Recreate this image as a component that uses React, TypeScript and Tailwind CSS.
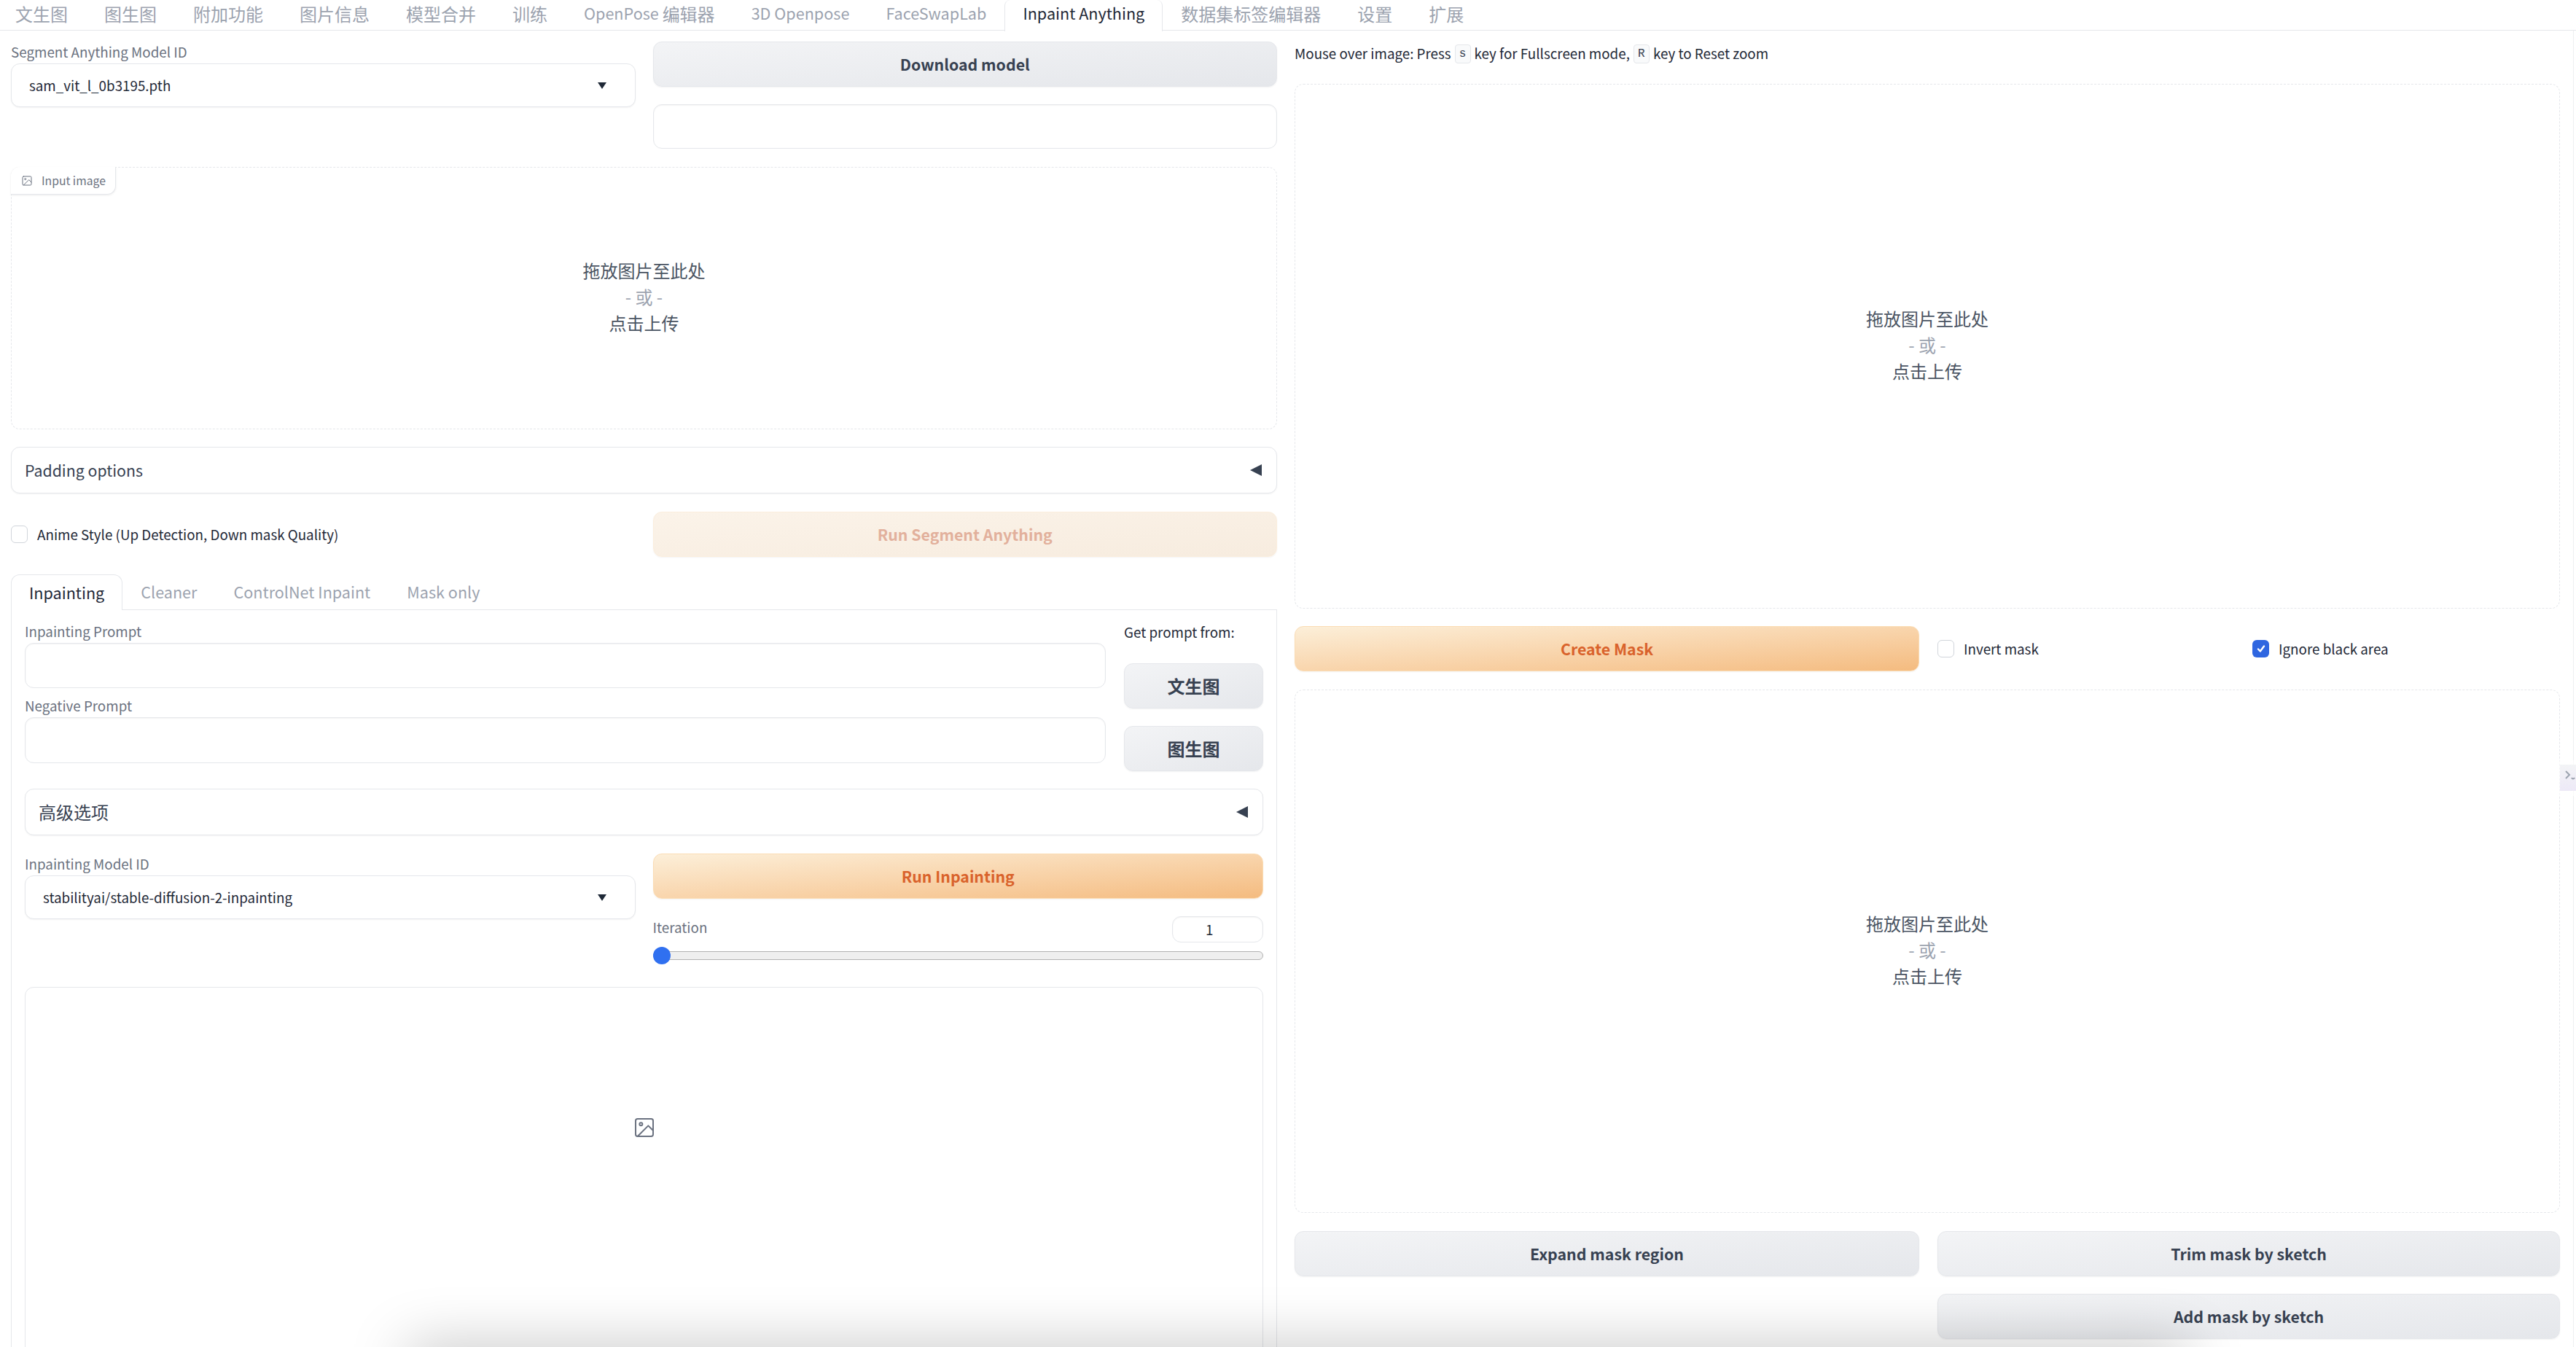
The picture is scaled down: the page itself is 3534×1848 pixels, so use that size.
const FONT = "font-['Noto_Sans_CJK_SC','Noto_Sans',sans-serif]";

function ImageIcon({ className }: { className: string }) {
  return (
    <svg className={className} viewBox="0 0 24 24" fill="none" stroke="currentColor" strokeWidth="1.5" strokeLinecap="round" strokeLinejoin="round">
      <rect x="3" y="3" width="18" height="18" rx="2" />
      <circle cx="8.5" cy="8.5" r="1.5" />
      <path d="M21 15l-5-5L5 21" />
    </svg>
  );
}

function Label({ children }: { children: React.ReactNode }) {
  return <div className="text-[18.8px] leading-[28px] h-[30px] text-[#6b7280] whitespace-nowrap">{children}</div>;
}

function Select({ value }: { value: string }) {
  return (
    <div className="h-[60px] flex items-center justify-between rounded-xl border border-[#e5e7eb] bg-white pl-6 pr-[39px] shadow-[0_1px_2px_rgba(0,0,0,0.05)] text-[18.8px] text-[#1f2937]">
      <span>{value}</span>
      <span className="w-0 h-0 border-l-[6px] border-r-[6px] border-t-[9px] border-l-transparent border-r-transparent border-t-[#1f2937]" />
    </div>
  );
}

function GrayButton({ children, className = "" }: { children: React.ReactNode; className?: string }) {
  return (
    <div className={`h-[62px] flex items-center justify-center rounded-xl border border-[#e5e7eb] bg-gradient-to-br from-[#f3f4f6] to-[#e5e7eb] shadow-[0_1px_2px_rgba(0,0,0,0.05)] text-[#374151] font-semibold text-[21.3px] ${className}`}>
      {children}
    </div>
  );
}

function PrimaryButton({ children }: { children: React.ReactNode }) {
  return (
    <div className="h-[62px] flex items-center justify-center rounded-xl border border-[#fbdcb4] bg-gradient-to-br from-[#fcefd9] to-[#f4bb7f] shadow-[0_1px_2px_rgba(0,0,0,0.05)] text-[#d9622b] font-semibold text-[21.3px]">
      {children}
    </div>
  );
}

function Upload() {
  return (
    <div className="text-center text-[24px] leading-[36px] text-[#4b5563] mb-[4px]">
      <div>拖放图片至此处</div>
      <div className="text-[#9ca3af]">- 或 -</div>
      <div>点击上传</div>
    </div>
  );
}

function DropZone({ className, tag = false }: { className: string; tag?: boolean }) {
  return (
    <div className={`relative flex items-center justify-center rounded-xl border border-dashed border-[#e5e7eb] bg-white ${className}`}>
      {tag && (
        <div className="absolute left-[-1px] top-[-1px] w-[144px] h-[38px] flex items-center gap-[12px] pl-[14px] bg-white rounded-tl-xl rounded-br-xl border-r border-b border-[#e5e7eb] shadow-[0_1px_3px_rgba(0,0,0,0.08)] text-[#6b7280] text-[15.7px]">
          <ImageIcon className="w-[16px] h-[16px] text-[#6b7280]" />
          <span>Input image</span>
        </div>
      )}
      <Upload />
    </div>
  );
}

function Accordion({ title, size }: { title: string; size: string }) {
  return (
    <div className={`h-[64px] flex items-center justify-between rounded-xl border border-[#e5e7eb] bg-white pl-[18px] pr-[20px] shadow-[0_1px_2px_rgba(0,0,0,0.05)] text-[#374151] ${size}`}>
      <span>{title}</span>
      <span className="w-0 h-0 border-t-[8px] border-b-[8px] border-r-[16px] border-t-transparent border-b-transparent border-r-[#374151]" />
    </div>
  );
}

function Check({ label, checked = false }: { label: string; checked?: boolean }) {
  return (
    <div className="flex items-center gap-[13px] text-[18.8px] text-[#1f2937] whitespace-nowrap">
      {checked ? (
        <span className="w-[23px] h-[24px] rounded-md bg-[#2f66e0] flex items-center justify-center">
          <svg viewBox="0 0 16 16" className="w-[16px] h-[16px]" fill="none" stroke="white" strokeWidth="2.4" strokeLinecap="round" strokeLinejoin="round">
            <path d="M4 8.5l2.8 3L12 4.5" />
          </svg>
        </span>
      ) : (
        <span className="w-[23px] h-[24px] rounded-md border border-[#d1d5db] bg-white" />
      )}
      <span>{label}</span>
    </div>
  );
}

function Textbox({ className }: { className: string }) {
  return <div className={`rounded-xl border border-[#e5e7eb] bg-white shadow-[inset_0_1px_2px_rgba(0,0,0,0.05)] ${className}`} />;
}

function Kbd({ children }: { children: React.ReactNode }) {
  return (
    <kbd className="mx-[5px] w-[22px] h-[26px] rounded border border-[#e5e7eb] bg-[#f9fafb] flex items-center justify-center text-[16px] text-[#374151]">
      {children}
    </kbd>
  );
}

const TOP_TABS: { latin?: string; cjk?: string }[] = [
  { cjk: "文生图" },
  { cjk: "图生图" },
  { cjk: "附加功能" },
  { cjk: "图片信息" },
  { cjk: "模型合并" },
  { cjk: "训练" },
  { latin: "OpenPose ", cjk: "编辑器" },
  { latin: "3D Openpose" },
  { latin: "FaceSwapLab" },
  { latin: "Inpaint Anything" },
  { cjk: "数据集标签编辑器" },
  { cjk: "设置" },
  { cjk: "扩展" },
];
const SUB_TABS = ["Inpainting", "Cleaner", "ControlNet Inpaint", "Mask only"];

export default function App() {
  return (
    <div className={`relative h-[1848px] overflow-hidden bg-white ${FONT}`}>
      {/* top tabs */}
      <div className="h-[42px] flex border-b border-[#e5e7eb] text-[24px] text-[#9ca3af]">
        {TOP_TABS.map((t, i) => (
          <div
            key={i}
            className={
              t.latin === "Inpaint Anything"
                ? "h-[43px] px-[24px] pb-[6px] flex items-center whitespace-pre bg-white border-x border-[#e5e7eb] rounded-t-lg text-[#1f2937]"
                : `h-[41px] px-[25px] pb-[4px] flex items-center whitespace-pre ${i === 0 ? "pl-[21px]" : ""}`
            }
          >
            {t.latin && <span className="text-[21.6px]">{t.latin}</span>}
            {t.cjk && <span>{t.cjk}</span>}
          </div>
        ))}
      </div>

      <div className="grid grid-cols-[1737px_1736px] gap-x-[24px] pl-[15px] pt-[15px]">
        {/* LEFT */}
        <div className="flex flex-col">
          <div className="grid grid-cols-2 gap-x-[24px]">
            <div>
              <Label>Segment Anything Model ID</Label>
              <Select value="sam_vit_l_0b3195.pth" />
            </div>
            <div className="flex flex-col gap-[24px]">
              <GrayButton>Download model</GrayButton>
              <Textbox className="h-[61px]" />
            </div>
          </div>

          <DropZone tag className="mt-[25px] h-[360px]" />

          <div className="mt-[24px]">
            <Accordion title="Padding options" size="text-[21.3px]" />
          </div>

          <div className="mt-[25px] grid grid-cols-2 gap-x-[24px] items-center">
            <Check label="Anime Style (Up Detection, Down mask Quality)" />
            <div className="h-[62px] flex items-center justify-center rounded-xl border border-[#fbeedd] bg-gradient-to-br from-[#fbf3e9] to-[#f7ecdf] shadow-[0_1px_2px_rgba(0,0,0,0.05)] text-[#e2b09c] font-semibold text-[21.3px]">
              Run Segment Anything
            </div>
          </div>

          {/* sub tabs */}
          <div className="mt-[24px] h-[49px] flex border-b border-[#e5e7eb] text-[21.6px] text-[#9ca3af]">
            {SUB_TABS.map((t, i) => (
              <div
                key={t}
                className={
                  i === 0
                    ? "h-[49px] px-[24px] flex items-center bg-white border border-b-0 border-[#e5e7eb] rounded-t-xl text-[#1f2937]"
                    : "h-[48px] px-[25px] flex items-center"
                }
              >
                {t}
              </div>
            ))}
          </div>

          <div className="border-x border-[#e5e7eb] px-[18px] pt-[15px]">
            <div className="grid grid-cols-[1483px_191px] gap-x-[25px]">
              <div>
                <Label>Inpainting Prompt</Label>
                <Textbox className="h-[62px]" />
                <div className="mt-[10px]">
                  <Label>Negative Prompt</Label>
                </div>
                <Textbox className="h-[63px]" />
              </div>
              <div className="flex flex-col">
                <div className="h-[30px] leading-[30px] text-[18.8px] text-[#1f2937] whitespace-nowrap">Get prompt from:</div>
                <GrayButton className="mt-[28px]"><span className="text-[24px]">文生图</span></GrayButton>
                <GrayButton className="mt-[24px]"><span className="text-[24px]">图生图</span></GrayButton>
              </div>
            </div>

            <div className="mt-[24px]">
              <Accordion title="高级选项" size="text-[24px]" />
            </div>

            <div className="mt-[25px] grid grid-cols-2 gap-x-[24px]">
              <div>
                <Label>Inpainting Model ID</Label>
                <Select value="stabilityai/stable-diffusion-2-inpainting" />
              </div>
              <div className="flex flex-col">
                <PrimaryButton>Run Inpainting</PrimaryButton>
                <div className="mt-[24px] flex justify-between h-[36px]">
                  <span className="text-[18.8px] leading-[30px] text-[#6b7280]">Iteration</span>
                  <div className="w-[125px] h-[36px] rounded-xl border border-[#e5e7eb] bg-white shadow-[inset_0_1px_2px_rgba(0,0,0,0.05)] flex items-center pl-[45px] text-[18.8px] text-[#1f2937]">1</div>
                </div>
                <div className="relative mt-[12px] h-[12px] rounded-md bg-[#efefef] border border-[#b2b2b2]">
                  <span className="absolute left-[-1px] top-[-7px] w-[24px] h-[24px] rounded-full bg-[#3070f0]" />
                </div>
              </div>
            </div>

            <div className="mt-[37px] h-[560px] flex items-start justify-center pt-[176px] rounded-xl border border-[#e5e7eb] bg-white">
              <ImageIcon className="w-[32px] h-[32px] text-[#6b7280]" />
            </div>
          </div>
        </div>

        {/* RIGHT */}
        <div className="flex flex-col">
          <div className="h-[30px] pt-[3px] flex items-center text-[18.8px] text-[#1f2937] whitespace-nowrap">
            <span>Mouse over image: Press</span>
            <Kbd>s</Kbd>
            <span>key for Fullscreen mode,</span>
            <Kbd>R</Kbd>
            <span>key to Reset zoom</span>
          </div>
          <DropZone className="mt-[28px] h-[720px]" />
          <div className="mt-[24px] grid grid-cols-[857px_854px] gap-x-[25px] items-center">
            <PrimaryButton>Create Mask</PrimaryButton>
            <div className="grid grid-cols-[432px_1fr]">
              <Check label="Invert mask" />
              <Check label="Ignore black area" checked />
            </div>
          </div>
          <DropZone className="mt-[25px] h-[718px]" />
          <div className="mt-[25px] grid grid-cols-[857px_854px] gap-x-[25px] gap-y-[24px]">
            <GrayButton>Expand mask region</GrayButton>
            <GrayButton>Trim mask by sketch</GrayButton>
            <div />
            <GrayButton>Add mask by sketch</GrayButton>
          </div>
        </div>
      </div>

      {/* floating shadow from an element just below the fold */}
      <div className="absolute left-[560px] top-[1848px] w-[2440px] h-[60px] shadow-[0_0_80px_rgba(0,0,0,0.25)]" />

      {/* thin vertical rule at the far right */}
      <div className="absolute right-[3px] top-[42px] bottom-0 w-px bg-[#eeeff1]" />

      {/* side handle */}
      <div className="absolute right-0 top-[1043px] w-[29px] h-[49px] bg-white/60 rounded-l-lg flex justify-end">
        <div className="mt-[6px] w-[22px] h-[36px] bg-gradient-to-b from-[#f3f4f6] to-[#ede9f7] text-[#9ca3af]">
          <svg viewBox="0 0 22 36" className="w-[22px] h-[36px]" fill="none" stroke="currentColor" strokeWidth="2">
            <path d="M8 9l5 5-5 5" />
            <path d="M16 18c1 2 3 2 4 0" />
          </svg>
        </div>
      </div>
    </div>
  );
}
